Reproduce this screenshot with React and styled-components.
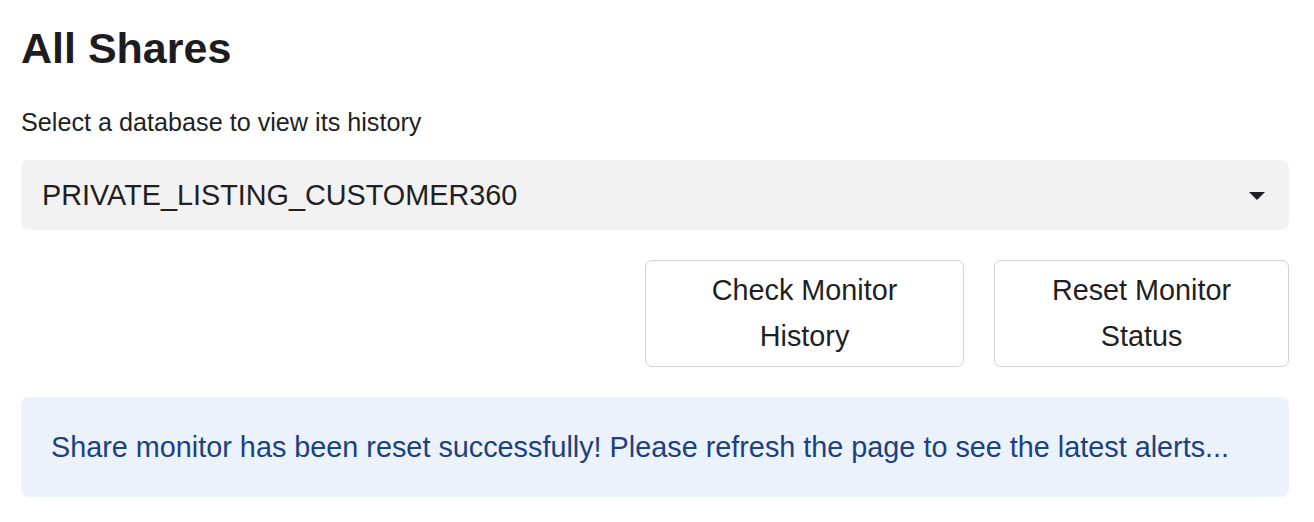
import React from "react";
import styled, { createGlobalStyle } from "styled-components";

const Global = createGlobalStyle`
  html, body { margin: 0; padding: 0; background: #ffffff; }
  body { font-family: "Liberation Sans", Arial, sans-serif; color: #1f1f24; }
`;

const Page = styled.div`
  padding: 18px 25px 0 21px;
  display: flex;
  flex-direction: column;
`;

const Title = styled.h1`
  margin: 0;
  font-size: 43px;
  font-weight: 700;
  line-height: 60px;
  color: #1d1d21;
`;

const Label = styled.label`
  margin-top: 26px;
  font-size: 25.2px;
  line-height: 36px;
  color: #1f1f24;
`;

const Select = styled.div`
  margin-top: 20px;
  height: 70px;
  background: #f2f2f2;
  border-radius: 8px;
  display: flex;
  align-items: center;
  justify-content: space-between;
  padding: 0 24px 0 21px;
  font-size: 28.8px;
  color: #1f1f24;
`;

const Caret = styled.span`
  width: 0;
  height: 0;
  border-left: 8px solid transparent;
  border-right: 8px solid transparent;
  border-top: 8px solid #1f1f24;
  margin-top: 2px;
`;

const ButtonRow = styled.div`
  margin-top: 30px;
  display: flex;
  justify-content: flex-end;
  gap: 30px;
`;

const Button = styled.button`
  width: ${(p) => p.$w}px;
  height: 107px;
  background: #ffffff;
  border: 1px solid #d3d3d6;
  border-radius: 7px;
  font-family: "Liberation Sans", Arial, sans-serif;
  font-size: 28.8px;
  line-height: 46px;
  color: #1f1f24;
  padding: 6px 20px 8px;
  text-align: center;
`;

const Alert = styled.div`
  margin-top: 30px;
  height: 100px;
  background: #ebf2fc;
  border-radius: 8px;
  display: flex;
  align-items: center;
  padding: 0 30px;
  font-size: 28.8px;
  color: #1d417f;
`;

export default function App() {
  return (
    <>
      <Global />
      <Page>
        <Title>All Shares</Title>
        <Label>Select a database to view its history</Label>
        <Select>
          <span>PRIVATE_LISTING_CUSTOMER360</span>
          <Caret />
        </Select>
        <ButtonRow>
          <Button $w={319}>Check Monitor<br />History</Button>
          <Button $w={295}>Reset Monitor<br />Status</Button>
        </ButtonRow>
        <Alert>
          Share monitor has been reset successfully! Please refresh the page to see the latest alerts...
        </Alert>
      </Page>
    </>
  );
}
